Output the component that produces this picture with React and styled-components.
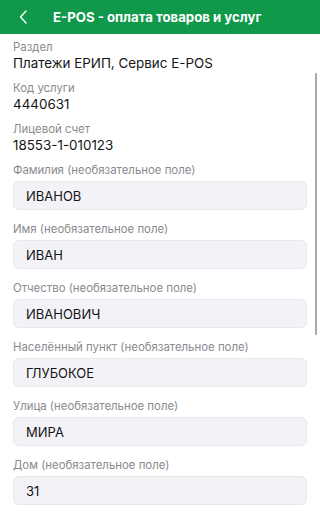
import React from "react";
import styled, { createGlobalStyle } from "styled-components";

const Global = createGlobalStyle`
  html, body { margin: 0; padding: 0; background: #ffffff; }
  body { font-family: "Inter", "Roboto", "Liberation Sans", sans-serif; -webkit-font-smoothing: antialiased; }
  * { box-sizing: border-box; }
`;

const Screen = styled.div`
  position: relative;
  width: 320px;
  height: 515px;
  overflow: hidden;
  background: #fff;
`;

const Header = styled.header`
  height: 34px;
  background: #10994a;
  display: flex;
  align-items: center;
  padding-left: 17px;
`;

const BackButton = styled.button`
  width: 12px;
  height: 16px;
  padding: 0;
  border: 0;
  background: transparent;
  display: flex;
  align-items: center;
  justify-content: center;
  margin-right: 24px;
`;

const Title = styled.h1`
  margin: 0;
  font-size: 13.2px;
  font-weight: 700;
  color: #fff;
`;

const Content = styled.main`
  padding: 6px 13px 0 13px;
  display: flex;
  flex-direction: column;
`;

const InfoItem = styled.div`
  display: flex;
  flex-direction: column;
  margin-bottom: 9px;
`;

const Label = styled.div`
  font-size: 11.4px;
  line-height: 14px;
  color: #8a8a8f;
`;

const Value = styled.div`
  font-size: 13.4px;
  line-height: 18px;
  color: #151515;
`;

const Field = styled.div`
  display: flex;
  flex-direction: column;
  gap: 4px;
  margin-bottom: 12px;
`;

const InputBox = styled.div`
  height: 29px;
  width: 294px;
  border-radius: 6px;
  background: #f3f3f7;
  border: 1px solid #e7e7ec;
  display: flex;
  align-items: center;
  padding-left: 12px;
  font-size: 13px;
  color: #151515;
`;

const Scrollbar = styled.div`
  position: absolute;
  right: 3px;
  top: 73px;
  width: 2px;
  height: 262px;
  border-radius: 1px;
  background: #a9a9ab;
`;

const info = [
  ["Раздел", "Платежи ЕРИП, Сервис E-POS"],
  ["Код услуги", "4440631"],
  ["Лицевой счет", "18553-1-010123"],
];

const fields = [
  ["Фамилия (необязательное поле)", "ИВАНОВ"],
  ["Имя (необязательное поле)", "ИВАН"],
  ["Отчество (необязательное поле)", "ИВАНОВИЧ"],
  ["Населённый пункт (необязательное поле)", "ГЛУБОКОЕ"],
  ["Улица (необязательное поле)", "МИРА"],
  ["Дом (необязательное поле)", "31"],
];

export default function App() {
  return (
    <>
      <Global />
      <Screen>
        <Header>
          <BackButton aria-label="Назад">
            <svg width="8" height="14" viewBox="0 0 8 14" fill="none">
              <path d="M7 1L1.5 7L7 13" stroke="#fff" strokeWidth="1.4" strokeLinecap="round" strokeLinejoin="round" />
            </svg>
          </BackButton>
          <Title>E-POS - оплата товаров и услуг</Title>
        </Header>
        <Content>
          {info.map(([l, v]) => (
            <InfoItem key={l}>
              <Label>{l}</Label>
              <Value>{v}</Value>
            </InfoItem>
          ))}
          {fields.map(([l, v]) => (
            <Field key={l}>
              <Label>{l}</Label>
              <InputBox>{v}</InputBox>
            </Field>
          ))}
        </Content>
        <Scrollbar />
      </Screen>
    </>
  );
}
